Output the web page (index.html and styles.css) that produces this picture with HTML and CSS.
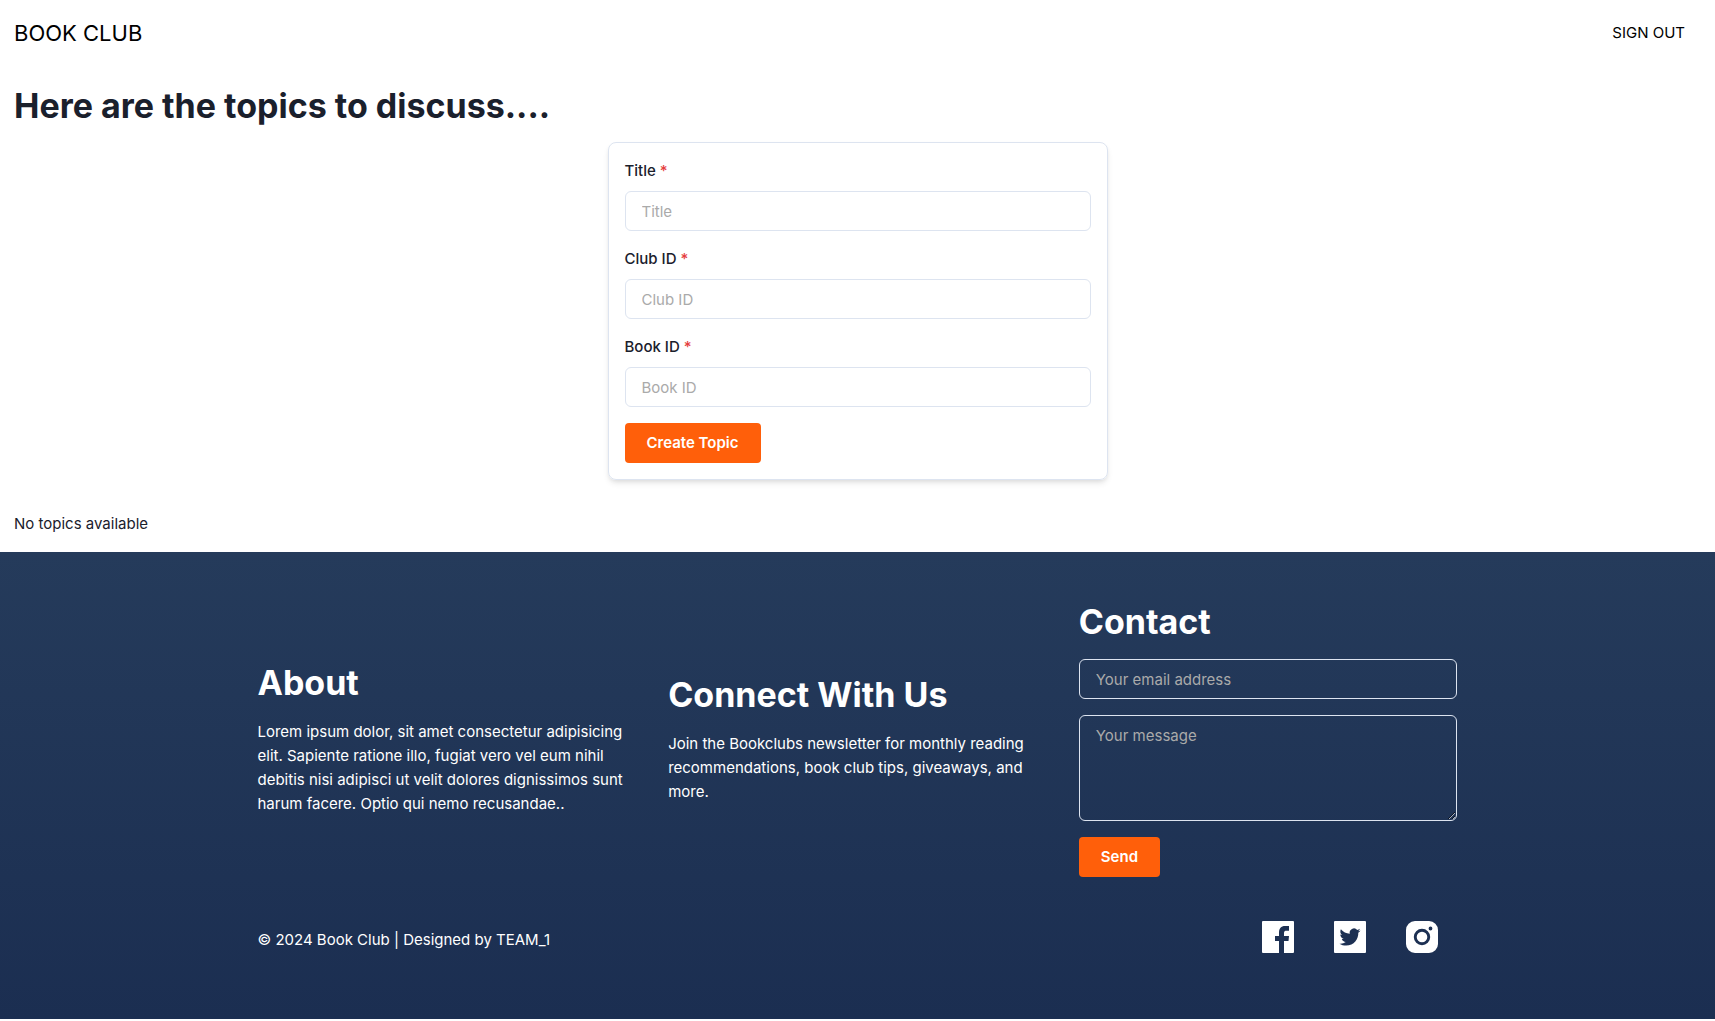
FILE: index.html
```html
<!DOCTYPE html>
<html lang="en">
<head>
<meta charset="utf-8">
<meta name="viewport" content="width=device-width, initial-scale=1">
<title>Book Club</title>
<link rel="stylesheet" href="styles.css">
</head>
<body>
<header class="navbar">
  <a class="brand" href="#">BOOK CLUB</a>
  <nav><a class="nav-link" href="#">SIGN OUT</a></nav>
</header>
<main class="topics">
  <h1 class="heading">Here are the topics to discuss....</h1>
  <form class="topic-form">
    <div class="field">
      <label class="label" for="title">Title <span class="required">*</span></label>
      <input class="input" id="title" type="text" placeholder="Title">
    </div>
    <div class="field">
      <label class="label" for="club">Club ID <span class="required">*</span></label>
      <input class="input" id="club" type="text" placeholder="Club ID">
    </div>
    <div class="field">
      <label class="label" for="book">Book ID <span class="required">*</span></label>
      <input class="input" id="book" type="text" placeholder="Book ID">
    </div>
    <button class="button" type="button">Create Topic</button>
  </form>
  <p class="empty">No topics available</p>
</main>
<footer class="footer">
  <div class="footer-inner">
    <div class="columns">
      <section>
        <h2 class="heading">About</h2>
        <p>Lorem ipsum dolor, sit amet consectetur adipisicing elit. Sapiente ratione illo, fugiat vero vel eum nihil debitis nisi adipisci ut velit dolores dignissimos sunt harum facere. Optio qui nemo recusandae..</p>
      </section>
      <section>
        <h2 class="heading">Connect With Us</h2>
        <p>Join the Bookclubs newsletter for monthly reading recommendations, book club tips, giveaways, and more.</p>
      </section>
      <section>
        <h2 class="heading">Contact</h2>
        <form class="contact-form">
          <input class="input" type="email" placeholder="Your email address" aria-label="Your email address">
          <textarea class="input message" placeholder="Your message" aria-label="Your message"></textarea>
          <button class="button" type="button">Send</button>
        </form>
      </section>
    </div>
    <div class="bottom">
      <p class="copyright">© 2024 Book Club | Designed by TEAM_1</p>
      <div class="social">
        <a class="social-link" href="#" aria-label="Facebook">
          <svg class="icon" viewBox="0 0 32 32"><path fill="currentColor" fill-rule="evenodd" d="M1 0h30a1 1 0 0 1 1 1v30a1 1 0 0 1-1 1h-9V20h4.500l.5-5h-5v-3c0-1.700.8-2.300 2.500-2.300H27V5h-4c-4 0-6 2.500-6 6.500V15h-4v5h4v12H1a1 1 0 0 1-1-1V1a1 1 0 0 1 1-1z"/></svg>
        </a>
        <a class="social-link" href="#" aria-label="Twitter">
          <svg class="icon" viewBox="0 0 32 32"><path fill="currentColor" fill-rule="evenodd" d="M1 0h30a1 1 0 0 1 1 1v30a1 1 0 0 1-1 1H1a1 1 0 0 1-1-1V1a1 1 0 0 1 1-1zM26.500 9.500c-.8.300-1.600.6-2.500.7.900-.5 1.600-1.400 1.900-2.400-.8.500-1.800.9-2.700 1.100a4.300 4.300 0 0 0-7.400 3.900c-3.600-.2-6.700-1.900-8.900-4.500-1.100 2-.6 4.500 1.300 5.800-.7 0-1.400-.2-1.900-.5 0 2.100 1.400 3.900 3.400 4.300-.6.200-1.300.2-1.900.1.500 1.700 2.100 2.900 4 3A8.700 8.700 0 0 1 5.500 22.700c1.900 1.200 4.200 1.900 6.600 1.900 8 0 12.500-6.800 12.200-12.900.9-.6 1.600-1.400 2.200-2.200z"/></svg>
        </a>
        <a class="social-link" href="#" aria-label="Instagram">
          <svg class="icon" viewBox="0 0 32 32"><path fill="currentColor" fill-rule="evenodd" d="M9 0h14a9 9 0 0 1 9 9v14a9 9 0 0 1-9 9H9a9 9 0 0 1-9-9V9a9 9 0 0 1 9-9zM16 7.800a8.200 8.200 0 1 0 0 16.400 8.200 8.200 0 0 0 0-16.400zM16 10.700a5.300 5.300 0 1 1 0 10.600 5.300 5.300 0 0 1 0-10.600zM24.500 5.600a1.900 1.900 0 1 0 0 3.800 1.900 1.900 0 0 0 0-3.800z"/></svg>
        </a>
      </div>
    </div>
  </div>
</footer>
</body>
</html>
```
FILE: styles.css
```css
* { box-sizing: border-box; margin: 0; }

body {
  background: #fff;
  color: #1a202c;
  font: 400 15px/24px Inter, "Liberation Sans", sans-serif;
}

a { color: inherit; text-decoration: none; }

.navbar {
  display: flex;
  justify-content: space-between;
  align-items: center;
  height: 66px;
  padding: 0 30px 0 14px;
  color: #000;
}

.brand { font-size: 22px; line-height: 32px; }

.topics { padding: 18px 14px 16px; }

.heading {
  font-size: 34px;
  line-height: 43px;
  font-weight: 700;
}

.topic-form {
  width: 100%;
  max-width: 500px;
  margin: 15px auto 32px;
  padding: 16px;
  border: 1px solid #dde4f0;
  border-radius: 8px;
  box-shadow: 0 4px 6px -1px rgba(0, 0, 0, 0.1), 0 2px 4px -1px rgba(0, 0, 0, 0.06);
}

.field { margin-bottom: 16px; }

.label {
  display: block;
  margin-bottom: 8px;
  font-weight: 500;
}

.required { color: #e53e3e; }

.input {
  display: block;
  width: 100%;
  height: 40px;
  padding: 0 16px;
  border: 1px solid #dde4f0;
  border-radius: 6px;
  background: transparent;
  color: inherit;
  font: inherit;
}

.input::placeholder { color: #aaa; opacity: 1; }

.message { height: 106px; padding: 8px 16px; }

.button {
  display: block;
  height: 40px;
  padding: 0 22px;
  border: 0;
  border-radius: 4px;
  background: #ff5f0a;
  color: #fff;
  font: inherit;
  font-weight: 600;
}

.footer {
  padding: 48px 16px 46px;
  background: linear-gradient(#253b5b, #1b2e51);
  color: #fff;
}

.footer-inner { max-width: 1200px; margin: 0 auto; }

.columns {
  display: grid;
  grid-template-columns: repeat(3, 1fr);
  align-items: center;
  gap: 32px;
}

.columns .heading { margin-bottom: 16px; }

.contact-form { display: grid; gap: 16px; justify-items: start; }

.bottom {
  display: flex;
  justify-content: space-between;
  align-items: center;
  margin-top: 24px;
}

.copyright { padding-top: 6px; }

.social { display: flex; }

.social-link {
  display: flex;
  padding: 20px;
}

.icon { width: 32px; height: 32px; }
```
